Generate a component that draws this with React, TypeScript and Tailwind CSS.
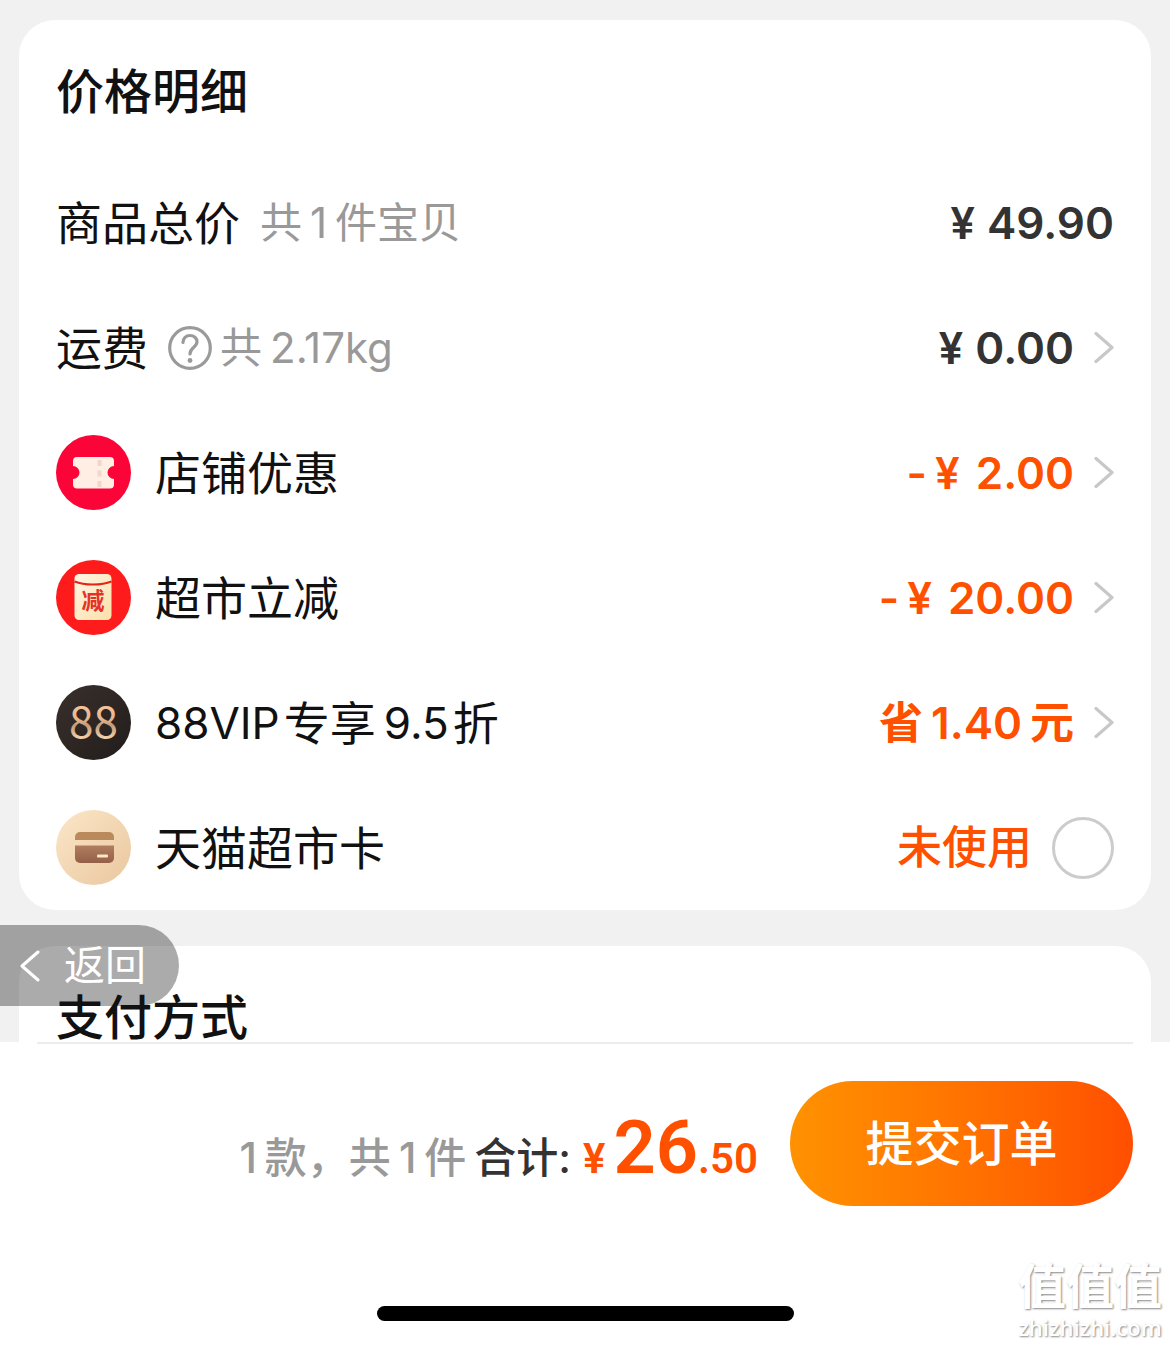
import type { ReactNode } from "react";

function Chevron() {
  return (
    <svg className="h-9 w-5 shrink-0" viewBox="0 0 20 36" fill="none" stroke="#c8c8c8" strokeWidth="3.2" strokeLinecap="round" strokeLinejoin="round" aria-hidden="true">
      <path d="M2 3.500 18 17.500 2 31.500" />
    </svg>
  );
}

function HelpIcon() {
  return (
    <svg className="size-11" viewBox="0 0 44 44" fill="none" stroke="#9a9a9a" strokeWidth="3.200" strokeLinecap="round" aria-hidden="true">
      <circle cx="22" cy="22" r="20.3" />
      <path d="M15 16.500c0-4.200 3.100-7 7-7s7 2.700 7 6.300c0 5.500-7 5.400-7 12.200" />
      <circle cx="22" cy="34.500" r="2.400" fill="#9a9a9a" stroke="none" />
    </svg>
  );
}

function CouponIcon() {
  return (
    <svg className="size-[75px] shrink-0" viewBox="0 0 75 75" aria-hidden="true">
      <circle cx="37.500" cy="37.500" r="37.500" fill="#fb0438" />
      <path d="M21 22h33a4 4 0 0 1 4 4v5a6.500 6.500 0 0 0 0 13V49.500a4 4 0 0 1-4 4H21a4 4 0 0 1-4-4v-5.500a6.500 6.500 0 0 0 0-13V26a4 4 0 0 1 4-4Z" fill="#feeee4" />
      <path d="M43.500 25v27" stroke="#f3d5ca" strokeWidth="4" strokeDasharray="6 4.500" />
    </svg>
  );
}

function PacketIcon() {
  return (
    <svg className="size-[75px] shrink-0" viewBox="0 0 75 75" aria-hidden="true">
      <defs>
        <linearGradient id="packet" x1="0" y1="0" x2="1" y2="1">
          <stop offset="0" stopColor="#fff6e6" />
          <stop offset="1" stopColor="#fbe0a8" />
        </linearGradient>
      </defs>
      <circle cx="37.500" cy="37.500" r="37.500" fill="#fd1b1c" />
      <rect x="18.500" y="14" width="37" height="46" rx="4.500" fill="url(#packet)" />
      <path d="M18.500 21.500c10 4 27 4 37 0" fill="none" stroke="#e0261c" strokeWidth="2" />
      <text x="37" y="49" textAnchor="middle" fontSize="23" fontWeight="700" fill="#e5332a" fontFamily='"Noto Sans CJK SC", sans-serif'>减</text>
    </svg>
  );
}

function VipIcon() {
  return (
    <svg className="size-[75px] shrink-0" viewBox="0 0 75 75" aria-hidden="true">
      <defs>
        <linearGradient id="vip-disc" x1="0" y1="0" x2="1" y2="1">
          <stop offset="0" stopColor="#3a302c" />
          <stop offset="1" stopColor="#211d1b" />
        </linearGradient>
        <linearGradient id="vip-digits" x1="0" y1="0" x2="0" y2="1">
          <stop offset="0.200" stopColor="#f6c9a2" />
          <stop offset="0.500" stopColor="#e9b68d" />
          <stop offset="0.600" stopColor="#c39a7a" />
          <stop offset="0.850" stopColor="#ffdfb8" />
        </linearGradient>
      </defs>
      <circle cx="37.500" cy="37.500" r="37.500" fill="url(#vip-disc)" />
      <text x="37.500" y="53" textAnchor="middle" fontSize="44" fill="url(#vip-digits)" fontFamily='"Noto Sans CJK SC", sans-serif'>88</text>
    </svg>
  );
}

function CardIcon() {
  return (
    <svg className="size-[75px] shrink-0" viewBox="0 0 75 75" aria-hidden="true">
      <defs>
        <linearGradient id="card-disc" x1="0" y1="0" x2="1" y2="1">
          <stop offset="0" stopColor="#fbe6c8" />
          <stop offset="1" stopColor="#eac79f" />
        </linearGradient>
        <linearGradient id="card-body" x1="0" y1="0" x2="0" y2="1">
          <stop offset="0" stopColor="#b27e5f" />
          <stop offset="1" stopColor="#935f48" />
        </linearGradient>
      </defs>
      <circle cx="37.500" cy="37.500" r="37.500" fill="url(#card-disc)" />
      <path d="M19 30v-3a5 5 0 0 1 5-5h29a5 5 0 0 1 5 5v3Z" fill="#bb8a5c" />
      <path d="M19 35.500h39V48a5 5 0 0 1-5 5H24a5 5 0 0 1-5-5Z" fill="url(#card-body)" />
      <rect x="41" y="44.500" width="11" height="3" rx="1" fill="#fbe6c8" />
    </svg>
  );
}

function Row({ label, children }: { label: ReactNode; children: ReactNode }) {
  return (
    <li className="flex h-[125px] items-center justify-between">
      <div className="flex items-center text-[46px] text-[#111]">{label}</div>
      {children}
    </li>
  );
}

function Price({ minus = false, amount }: { minus?: boolean; amount: string }) {
  return (
    <span className="flex items-center text-[44px] font-semibold">
      {minus && <span className="mr-2">-</span>}
      <span className={minus ? "mr-4" : "mr-3"}>¥</span>
      {amount}
    </span>
  );
}

function LinkValue({ children, className }: { children: ReactNode; className: string }) {
  return (
    <button type="button" className={"flex items-center gap-5 " + className}>
      {children}
      <Chevron />
    </button>
  );
}

export default function App() {
  return (
    <div className="flex min-h-screen flex-col bg-[#f1f1f1] font-['Inter','Noto_Sans_CJK_SC',sans-serif] leading-none">
      <main className="flex flex-col gap-9 px-[19px] pt-5">
        <section className="rounded-[36px] bg-white px-[37px]">
          <h2 className="flex h-[140px] items-center pt-1 text-5xl leading-none font-medium text-[#111]">价格明细</h2>
          <ul>
            <Row label={<>商品总价<span className="ml-5 flex gap-2 text-[42px] text-[#999]"><span>共</span><span>1</span><span>件宝贝</span></span></>}>
              <span className="text-[#333]"><Price amount="49.90" /></span>
            </Row>
            <Row
              label={
                <>
                  运费
                  <button type="button" aria-label="运费说明" className="ml-5"><HelpIcon /></button>
                  <span className="ml-2 flex gap-2 text-[42px] text-[#999]"><span>共</span><span>2.17kg</span></span>
                </>
              }
            >
              <LinkValue className="text-[#333]"><Price amount="0.00" /></LinkValue>
            </Row>
            <Row label={<><CouponIcon /><span className="ml-6">店铺优惠</span></>}>
              <LinkValue className="text-[#ff5000]"><Price minus amount="2.00" /></LinkValue>
            </Row>
            <Row label={<><PacketIcon /><span className="ml-6">超市立减</span></>}>
              <LinkValue className="text-[#ff5000]"><Price minus amount="20.00" /></LinkValue>
            </Row>
            <Row label={<><VipIcon /><span className="ml-6 flex items-center gap-1"><span className="text-[44px]">88VIP</span><span>专享</span><span className="ml-1 text-[44px]">9.5</span><span>折</span></span></>}>
              <LinkValue className="text-[#ff5000]"><span className="flex items-center gap-2 text-[44px] font-semibold"><span>省</span><span>1.40</span><span>元</span></span></LinkValue>
            </Row>
            <Row label={<><CardIcon /><label htmlFor="market-card" className="ml-6">天猫超市卡</label></>}>
              <div className="flex items-center gap-5 text-[45px] font-medium text-[#ff5000]">
                <span>未使用</span>
                <input id="market-card" type="checkbox" className="size-[62px] appearance-none rounded-full border-3 border-[#ccc] bg-white checked:bg-[#ff5000]" />
              </div>
            </Row>
          </ul>
        </section>

        <section className="relative h-24 rounded-t-[36px] bg-white px-[37px]">
          <button type="button" className="absolute -top-[21px] -left-[19px] flex h-[81px] w-[179px] items-center gap-6 rounded-r-full bg-black/33 pl-5 text-[41px] text-white">
            <svg className="h-8 w-5" viewBox="0 0 20 32" fill="none" stroke="currentColor" strokeWidth="3" strokeLinecap="round" strokeLinejoin="round" aria-hidden="true">
              <path d="M18 2 2 16l16 14" />
            </svg>
            返回
          </button>
          <h2 className="relative pt-12 text-5xl leading-none font-medium text-[#111]">支付方式</h2>
        </section>
      </main>

      <footer className="relative flex grow flex-col bg-white px-[37px]">
        <div className="border-t-2 border-[#ececec]" />
        <div className="flex items-center justify-end gap-8 pt-[37px]">
          <p className="flex items-baseline pt-2 text-[42px] font-medium">
            <span className="mr-2 flex items-baseline gap-2 text-[#999]"><span>1</span><span>款，共</span><span>1</span><span>件</span></span>
            <span className="text-[#333]">合计:</span>
            <span className="ml-3 font-['Roboto',sans-serif] text-[42px] font-semibold text-[#ff5000]">¥</span>
            <strong className="ml-2 font-['Roboto',sans-serif] text-[74px] font-semibold text-[#ff5000]">26</strong>
            <span className="font-['Roboto',sans-serif] text-[42px] font-semibold text-[#ff5000]">.50</span>
          </p>
          <button type="button" className="h-[125px] w-[343px] rounded-full bg-linear-to-r from-[#ff9200] to-[#ff4e00] text-5xl font-medium text-white">提交订单</button>
        </div>
        <div className="mx-auto mt-[100px] h-[15px] w-[417px] rounded-full bg-black" />
        <div className="absolute right-2 bottom-1 flex flex-col items-center text-white [text-shadow:1px_1px_2px_#888]">
          <span className="text-5xl leading-[52px] font-bold">值值值</span>
          <span className="font-['Open_Sans',sans-serif] text-[22px] leading-7 font-semibold">zhizhizhi.com</span>
        </div>
      </footer>
    </div>
  );
}
